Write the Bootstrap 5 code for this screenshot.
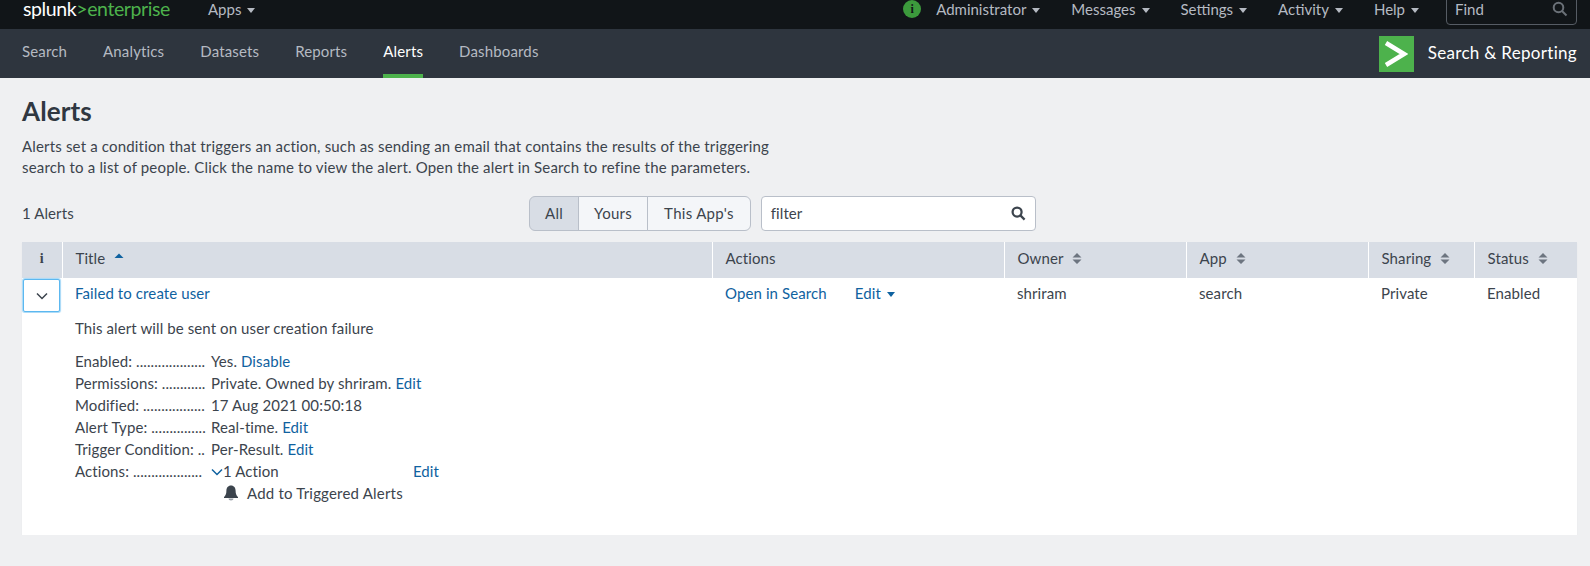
<!DOCTYPE html>
<html>
<head>
<meta charset="utf-8">
<title>Alerts</title>
<link href="https://cdn.jsdelivr.net/npm/bootstrap@5.3.3/dist/css/bootstrap.min.css" rel="stylesheet">
<script src="https://cdn.jsdelivr.net/npm/bootstrap@5.3.3/dist/js/bootstrap.bundle.min.js"></script>
<style>
body { background-color: #eff0f2; font-family: Lato, "Liberation Sans", sans-serif; font-size: 15px; letter-spacing: .1px; color: #3c444d; overflow: hidden; }
a { color: #0f62a0; text-decoration: none; }
.top-bar { background-color: #111518; height: 40px; margin-top: -11px; padding: 0 13px 0 23px; color: #b5bac2; font-size: 15px; letter-spacing: 0; }
.brand-text { color: #fff; font-size: 19.5px; letter-spacing: -0.4px; width: 185px; }
.brand-text span { color: #4db24c; }
.top-link { color: #b5bac2; }
.top-caret { display: inline-block; width: 0; height: 0; border-left: 4.5px solid transparent; border-right: 4.5px solid transparent; border-top: 5px solid currentColor; margin-left: 6px; vertical-align: 2px; }
.top-items { gap: 31px; }
.info-dot { width: 18px; height: 18px; border-radius: 50%; background-color: #3c9a3c; color: #111518; font: bold 12px/18px "Liberation Serif", serif; text-align: center; margin-right: -16px; }
.find-box { width: 131px; height: 31px; margin-left: 27px; border: 1px solid #565c64; border-radius: 4px; padding: 0 8px; color: #b5bac2; }
.app-bar { background-color: #2e353e; height: 49px; padding: 0 13px 0 22px; font-size: 15px; letter-spacing: .15px; }
.app-link { color: #b5bac2; display: block; line-height: 45px; border-bottom: 4px solid transparent; margin-right: 36px; }
.app-link.is-current { color: #fff; border-bottom-color: #4db24c; }
.app-mark { width: 35px; height: 36px; background-color: #4db24c; margin-right: 14px; }
.app-name { color: #fff; font-size: 17px; letter-spacing: .3px; padding-bottom: 2px; }
.page-title { font-size: 26px; font-weight: 700; color: #2f3741; margin: 17px 0 9px; line-height: 32px; }
.page-intro { width: 760px; line-height: 21px; margin: 0 0 18px; letter-spacing: .17px; }
.page-wrap { padding: 0 13px 0 22px; }
.count-label { width: 507px; }
.scope-group .btn { background-color: #f4f6f9; border-color: #b9bfc9; color: #3c444d; font-size: 15px; letter-spacing: .3px; height: 35px; padding: 0 15px; line-height: 33px; }
.scope-group .btn:last-child { padding: 0 16px; }
.scope-group .btn.is-on { background-color: #d8dde5; }
.filter-box { width: 275px; height: 35px; margin-left: 10px; background-color: #fff; border: 1px solid #b9bfc9; border-radius: 4px; padding: 0 9px; }
.alert-table { table-layout: fixed; width: 1555px; margin: 11px 0 0; background-color: #fff; color: #3c444d; box-shadow: 0 1px 1px rgba(0,0,0,.06); }
.alert-table th { background-color: #d8dde5; font-weight: 400; height: 36px; padding: 0 13px 3px; border: 0; border-left: 1px solid #fff; vertical-align: middle; color: #3c444d; }
.alert-table th:first-child { border-left: 0; text-align: center; padding: 0 0 3px; font: bold 14px "Liberation Serif", serif; }
.alert-table td { border: 0; padding: 0 13px 4px; height: 34px; vertical-align: middle; background-color: #fff; color: #3c444d; }
.alert-table td.toggle-cell { padding: 1px; }
.expand-btn { width: 37px; height: 33px; border: 1px solid #5cb8f0; border-radius: 2px; box-shadow: 0 0 1px 1px #a5d8f7; background-color: #fff; padding: 0; display: block; margin-left: 0; }
.sort-icon { margin-left: 5px; vertical-align: -1px; }
.edit-gap { margin-left: 28px; }
.detail-cell { height: 222px !important; vertical-align: top !important; padding-top: 5px !important; }
.detail-note { line-height: 20px; margin-bottom: 12px; }
.detail-row { display: flex; line-height: 22px; }
.detail-key { width: 130px; margin-right: 6px; white-space: nowrap; flex: none; }
.detail-actions { width: 228px; display: flex; }
.detail-bell { padding-left: 12px; gap: 8px; line-height: 22px; letter-spacing: .2px; }
</style>
</head>
<body>
<div class="top-bar d-flex align-items-center">
    <div class="brand-text">splunk<span>&gt;enterprise</span></div>
    <a class="top-link" href="#">Apps<span class="top-caret"></span></a>
    <div class="top-items d-flex align-items-center ms-auto">
        <div class="info-dot">i</div>
        <a class="top-link" href="#">Administrator<span class="top-caret"></span></a>
        <a class="top-link" href="#">Messages<span class="top-caret"></span></a>
        <a class="top-link" href="#">Settings<span class="top-caret"></span></a>
        <a class="top-link" href="#">Activity<span class="top-caret"></span></a>
        <a class="top-link" href="#">Help<span class="top-caret"></span></a>
    </div>
    <div class="find-box d-flex align-items-center justify-content-between">
        <span>Find</span>
        <svg width="16" height="16" viewBox="0 0 16 16" fill="none" stroke="#6b7178" stroke-width="2"><circle cx="6.5" cy="6.5" r="4.8"/><path d="M10 10l4.5 4.5"/></svg>
    </div>
</div>
<div class="app-bar d-flex align-items-center">
    <a class="app-link" href="#">Search</a>
    <a class="app-link" href="#">Analytics</a>
    <a class="app-link" href="#">Datasets</a>
    <a class="app-link" href="#">Reports</a>
    <a class="app-link is-current" href="#">Alerts</a>
    <a class="app-link" href="#">Dashboards</a>
    <div class="app-mark ms-auto d-flex align-items-center justify-content-center">
        <svg width="24" height="30" viewBox="0 0 24 30" fill="none" stroke="#fff" stroke-width="4.5"><path d="M2 4l18 11L2 26"/></svg>
    </div>
    <div class="app-name">Search &amp; Reporting</div>
</div>
<div class="page-wrap">
    <h1 class="page-title">Alerts</h1>
    <p class="page-intro">Alerts set a condition that triggers an action, such as sending an email that contains the results of the triggering search to a list of people. Click the name to view the alert. Open the alert in Search to refine the parameters.</p>
    <div class="d-flex align-items-center">
        <div class="count-label">1 Alerts</div>
        <div class="btn-group scope-group">
            <button type="button" class="btn is-on">All</button>
            <button type="button" class="btn">Yours</button>
            <button type="button" class="btn">This App's</button>
        </div>
        <div class="filter-box d-flex align-items-center justify-content-between">
            <span>filter</span>
            <svg width="15" height="15" viewBox="0 0 16 16" fill="none" stroke="#3c444d" stroke-width="2.4"><circle cx="6.5" cy="6.5" r="4.8"/><path d="M10 10l4.5 4.5"/></svg>
        </div>
    </div>
    <table class="table alert-table">
        <colgroup>
            <col style="width:40px"><col style="width:650px"><col style="width:292px"><col style="width:182px"><col style="width:182px"><col style="width:106px"><col style="width:103px">
        </colgroup>
        <thead>
            <tr>
                <th>i</th>
                <th>Title <svg class="sort-icon" width="10" height="13" viewBox="0 0 10 13" fill="#0f62a0"><path d="M5 1.500L9.500 6H.5z"/></svg></th>
                <th>Actions</th>
                <th>Owner <svg class="sort-icon" width="10" height="13" viewBox="0 0 10 13" fill="#6d7580"><path d="M5 1L9.500 5.500H.5zM5 12L.5 7.500h9z"/></svg></th>
                <th>App <svg class="sort-icon" width="10" height="13" viewBox="0 0 10 13" fill="#6d7580"><path d="M5 1L9.500 5.500H.5zM5 12L.5 7.500h9z"/></svg></th>
                <th>Sharing <svg class="sort-icon" width="10" height="13" viewBox="0 0 10 13" fill="#6d7580"><path d="M5 1L9.500 5.500H.5zM5 12L.5 7.500h9z"/></svg></th>
                <th>Status <svg class="sort-icon" width="10" height="13" viewBox="0 0 10 13" fill="#6d7580"><path d="M5 1L9.500 5.500H.5zM5 12L.5 7.500h9z"/></svg></th>
            </tr>
        </thead>
        <tbody>
            <tr>
                <td class="toggle-cell">
                    <button type="button" class="expand-btn d-flex align-items-center justify-content-center">
                        <svg width="12" height="8" viewBox="0 0 12 8" fill="none" stroke="#3c444d" stroke-width="1.5"><path d="M1 1.500l5 5 5-5"/></svg>
                    </button>
                </td>
                <td><a href="#">Failed to create user</a></td>
                <td><a href="#">Open in Search</a><a class="edit-gap" href="#">Edit<span class="top-caret"></span></a></td>
                <td>shriram</td>
                <td>search</td>
                <td>Private</td>
                <td>Enabled</td>
            </tr>
            <tr>
                <td></td>
                <td class="detail-cell" colspan="6">
                    <div class="detail-note">This alert will be sent on user creation failure</div>
                    <div class="detail-row"><div class="detail-key">Enabled: ...................</div><div>Yes. <a href="#">Disable</a></div></div>
                    <div class="detail-row"><div class="detail-key">Permissions: ............</div><div>Private. Owned by shriram. <a href="#">Edit</a></div></div>
                    <div class="detail-row"><div class="detail-key">Modified: .................</div><div>17 Aug 2021 00:50:18</div></div>
                    <div class="detail-row"><div class="detail-key">Alert Type: ...............</div><div>Real-time. <a href="#">Edit</a></div></div>
                    <div class="detail-row"><div class="detail-key">Trigger Condition: ..</div><div>Per-Result. <a href="#">Edit</a></div></div>
                    <div class="detail-row">
                        <div class="detail-key">Actions: ...................</div>
                        <div class="detail-actions">
                            <svg class="mt-2" width="12" height="8" viewBox="0 0 12 8" fill="none" stroke="#0f62a0" stroke-width="1.5"><path d="M1 1.500l5 5 5-5"/></svg>
                            <span>1 Action</span>
                            <a class="ms-auto" href="#">Edit</a>
                        </div>
                    </div>
                    <div class="detail-row">
                        <div class="detail-key"></div>
                        <div class="detail-bell d-flex align-items-center">
                            <svg width="16" height="16" viewBox="0 0 16 16"><path fill="#3c444d" d="M8 .5c-3 0-4.600 2.400-4.600 5.200 0 3.200-.9 5-2.400 6.300v1h14v-1c-1.500-1.300-2.400-3.100-2.400-6.300C12.600 2.900 11 .5 8 .5z"/><path fill="#9aa0a8" d="M5.500 13.500h5c0 1.300-1.100 2-2.500 2s-2.500-.7-2.500-2z"/></svg>
                            <span>Add to Triggered Alerts</span>
                        </div>
                    </div>
                </td>
            </tr>
        </tbody>
    </table>
</div>
</body>
</html>
